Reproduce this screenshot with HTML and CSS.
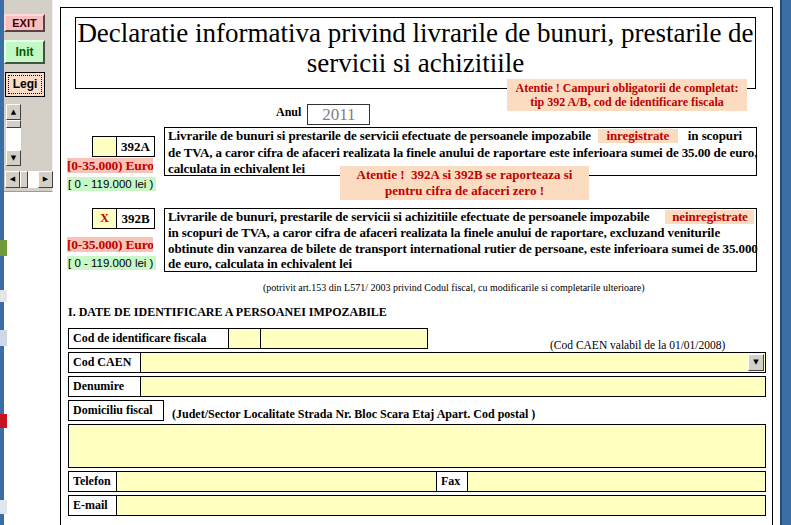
FILE: index.html
```html
<!DOCTYPE html>
<html>

<head>
    <meta charset="UTF-8" />
    <title>Declaratie 392</title>
    <link rel="stylesheet" href="styles.css">
</head>

<body>
    <div class="desk-left">
        <div class="desk-icon icon-a"></div>
        <div class="desk-icon icon-b"></div>
        <div class="desk-icon icon-c"></div>
        <div class="desk-icon icon-d"></div>
        <div class="desk-icon icon-e"></div>
    </div>

    <div class="toolbar-col">
        <div class="toolbar">
            <button class="tb-btn exit">EXIT</button>
            <button class="tb-btn init">Init</button>
            <button class="tb-btn legi"><span>Legi</span></button>
            <div class="vscroll">
                <div class="sb-btn">&#9650;</div>
                <div class="sb-thumb-v"></div>
                <div class="sb-track-v"></div>
                <div class="sb-btn">&#9660;</div>
            </div>
            <div class="hscroll">
                <div class="sb-btn">&#9664;</div>
                <div class="sb-thumb-h"></div>
                <div class="sb-track-h"></div>
                <div class="sb-btn">&#9654;</div>
            </div>
        </div>
    </div>

    <div class="gap-left"></div>

    <div class="page">
        <div class="title-box">
            Declaratie informativa privind livrarile de bunuri, prestarile de servicii si achizitiile
        </div>

        <div class="note note-top">
            Atentie ! Campuri obligatorii de completat:<br>
            tip 392 A/B, cod de identificare fiscala
        </div>

        <div class="year-row">
            <span class="year-label">Anul</span>
            <div class="year-input">2011</div>
        </div>

        <div class="type-row type-a">
            <div class="type-side">
                <div class="type-code">
                    <div class="type-check"></div>
                    <div class="type-name">392A</div>
                </div>
                <div class="euro">[0-35.000) Euro</div>
                <div class="lei">[ 0 - 119.000 lei )</div>
            </div>
            <div class="type-text">
                Livrarile de bunuri si prestarile de servicii efectuate de persoanele impozabile<span class="mark">inregistrate</span>in scopuri<br>
                de TVA, a caror cifra de afaceri realizata la finele anului de raportare este inferioara sumei de 35.00 de euro,<br>
                calculata in echivalent lei
            </div>
        </div>

        <div class="note note-mid">
            Atentie ! &nbsp;392A si 392B se raporteaza si<br>
            pentru cifra de afaceri zero !
        </div>

        <div class="type-row type-b">
            <div class="type-side">
                <div class="type-code">
                    <div class="type-check">X</div>
                    <div class="type-name">392B</div>
                </div>
                <div class="euro">[0-35.000) Euro</div>
                <div class="lei">[ 0 - 119.000 lei )</div>
            </div>
            <div class="type-text">
                Livrarile de bunuri, prestarile de servicii si achizitiile efectuate de persoanele impozabile<span class="mark mark-b">neinregistrate</span><br>
                in scopuri de TVA, a caror cifra de afaceri realizata la finele anului de raportare, excluzand veniturile<br>
                obtinute din vanzarea de bilete de transport international rutier de persoane, este inferioara sumei de 35.000<br>
                de euro, calculata in echivalent lei
            </div>
        </div>

        <div class="legal">(potrivit art.153 din L571/ 2003 privind Codul fiscal, cu modificarile si completarile ulterioare)</div>

        <div class="section-title">I. DATE DE IDENTIFICARE A PERSOANEI IMPOZABILE</div>

        <div class="form-row">
            <div class="field-label lbl-cif">Cod de identificare fiscala</div>
            <div class="field cif-prefix"></div>
            <div class="field cif-number"></div>
            <div class="caen-note">(Cod CAEN valabil de la 01/01/2008)</div>
        </div>

        <div class="form-row">
            <div class="field-label lbl-short">Cod CAEN</div>
            <div class="field field-grow select">
                <div class="select-btn">&#9660;</div>
            </div>
        </div>

        <div class="form-row">
            <div class="field-label lbl-short">Denumire</div>
            <div class="field field-grow"></div>
        </div>

        <div class="form-row addr-row">
            <div class="field-label lbl-addr">Domiciliu fiscal</div>
            <div class="addr-hint">(Judet/Sector Localitate Strada Nr. Bloc Scara Etaj Apart. Cod postal )</div>
        </div>

        <div class="field addr-box"></div>

        <div class="form-row">
            <div class="field-label lbl-tel">Telefon</div>
            <div class="field tel-field"></div>
            <div class="field-label lbl-fax">Fax</div>
            <div class="field field-grow"></div>
        </div>

        <div class="form-row">
            <div class="field-label lbl-tel">E-mail</div>
            <div class="field field-grow"></div>
        </div>
    </div>

    <div class="gap-right"></div>
    <div class="desk-right"></div>
</body>

</html>
```

FILE: styles.css
```css
* {
    box-sizing: border-box;
}

body {
    margin: 0;
    width: 791px;
    height: 525px;
    overflow: hidden;
    display: flex;
    background: #fff;
    font-family: "Liberation Serif", "Times New Roman", serif;
    color: #000;
}

/* desktop edges */
.desk-left {
    position: relative;
    width: 4px;
    background: #3a6ea5;
    flex-shrink: 0;
}

.desk-icon {
    position: absolute;
    left: 0;
    width: 7px;
}

.icon-a {
    top: 240px;
    height: 16px;
    background: #6f9a3c;
}

.icon-b {
    top: 290px;
    height: 12px;
    background: #e6e6e6;
}

.icon-c {
    top: 330px;
    height: 16px;
    background: #cfd8e6;
}

.icon-d {
    top: 414px;
    height: 14px;
    background: #c8141e;
}

.icon-e {
    top: 500px;
    height: 14px;
    background: #dfe6f0;
}

.desk-right {
    width: 11px;
    background: #3a6ea5;
    border-left: 2px solid #24507e;
    flex-shrink: 0;
}

.gap-left {
    width: 7px;
    flex-shrink: 0;
}

.gap-right {
    width: 7px;
    flex-shrink: 0;
}

/* left toolbar */
.toolbar-col {
    width: 49px;
    flex-shrink: 0;
}

.toolbar {
    height: 192px;
    background: #d4d0c8;
    border-right: 1px solid #f4f3ef;
    border-bottom: 1px solid #a09c94;
    padding-top: 14px;
    display: flex;
    flex-direction: column;
}

.tb-btn {
    width: 41px;
    padding: 0;
    font-family: "Liberation Sans", Arial, sans-serif;
    font-weight: bold;
    font-size: 11px;
    border: 2px outset #e0e0e0;
    cursor: pointer;
}

.exit {
    height: 18px;
    background: #f6c0c0;
    color: #400000;
    border-color: #ffd8d8 #b08080 #b08080 #ffd8d8;
}

.init {
    height: 24px;
    margin-top: 8px;
    background: #c4f8c4;
    color: #005a00;
    font-size: 12px;
    border-color: #e4ffe4 #80a880 #80a880 #e4ffe4;
}

.legi {
    height: 25px;
    margin-top: 8px;
    margin-left: 1px;
    width: 40px;
    background: #fbdcc8;
    border: 1px solid #000;
    font-size: 12px;
    padding: 2px;
}

.legi span {
    display: block;
    height: 100%;
    border: 1px dotted #000;
    line-height: 17px;
}

.vscroll {
    margin-top: 7px;
    margin-left: 2px;
    width: 15px;
    display: flex;
    flex-direction: column;
}

.hscroll {
    margin-top: 5px;
    margin-left: 1px;
    width: 48px;
    height: 17px;
    display: flex;
}

.sb-btn {
    width: 15px;
    height: 16px;
    background: #d4d0c8;
    border: 1px solid;
    border-color: #fff #404040 #404040 #fff;
    font-size: 7px;
    line-height: 14px;
    text-align: center;
    color: #000;
    font-family: "DejaVu Sans", sans-serif;
}

.hscroll .sb-btn {
    height: 17px;
}

.sb-thumb-v {
    height: 8px;
    background: #d4d0c8;
    border: 1px solid;
    border-color: #fff #404040 #404040 #fff;
}

.sb-track-v {
    height: 22px;
    background: #fff;
}

.sb-thumb-h {
    width: 8px;
    background: #d4d0c8;
    border: 1px solid;
    border-color: #fff #404040 #404040 #fff;
}

.sb-track-h {
    flex: 1;
    background: #fff;
}

/* page */
.page {
    position: relative;
    width: 713px;
    height: 530px;
    margin-top: 7px;
    border: 1px solid #000;
    border-bottom: none;
    flex-shrink: 0;
}

.title-box {
    margin: 9px 0 0 14px;
    width: 681px;
    height: 72px;
    border: 1px solid #000;
    text-align: center;
    font-size: 27px;
    line-height: 30px;
    padding-top: 0;
}

.note {
    position: absolute;
    background: #fcdcc0;
    color: #c00000;
    font-weight: bold;
    text-align: center;
    white-space: nowrap;
}

.note-top {
    left: 446px;
    top: 71px;
    width: 240px;
    height: 32px;
    font-size: 12px;
    line-height: 14px;
    padding-top: 2px;
}

.note-mid {
    left: 279px;
    top: 158px;
    width: 249px;
    height: 34px;
    font-size: 13px;
    line-height: 16px;
    padding-top: 1px;
}

.year-row {
    margin-top: 15px;
    padding-left: 215px;
    display: flex;
    align-items: flex-start;
}

.year-label {
    font-weight: bold;
    font-size: 12px;
    line-height: 14px;
    margin-top: 1px;
}

.year-input {
    margin-left: 6px;
    width: 63px;
    height: 21px;
    border: 1px solid #333;
    color: #808080;
    font-size: 17px;
    line-height: 19px;
    text-align: center;
}

.type-row {
    display: flex;
    align-items: flex-start;
    margin-top: 2px;
}

.type-b {
    margin-top: 17px;
}

.type-side {
    margin-left: 6px;
    width: 90px;
    margin-top: 9px;
}

.type-b .type-side {
    margin-top: 0;
}

.type-code {
    margin-left: 25px;
    width: 63px;
    height: 21px;
    border: 1px solid #000;
    display: flex;
}

.type-check {
    width: 24px;
    background: #ffffc2;
    border-right: 1px solid #000;
    color: #c00000;
    font-weight: bold;
    font-size: 12px;
    text-align: center;
    line-height: 19px;
}

.type-name {
    flex: 1;
    text-align: center;
    font-weight: bold;
    font-size: 13px;
    line-height: 19px;
}

.euro {
    margin-top: 1px;
    width: 86px;
    height: 15px;
    background: #f8c4b8;
    color: #c00000;
    font-weight: bold;
    font-size: 13.5px;
    line-height: 15px;
    letter-spacing: -0.2px;
    white-space: nowrap;
    overflow: hidden;
}

.type-b .euro {
    margin-top: 8px;
}

.lei {
    margin-top: 4px;
    width: 89px;
    height: 14px;
    background: #c8f8c8;
    font-family: "Liberation Sans", Arial, sans-serif;
    font-size: 11.5px;
    line-height: 14px;
    padding-left: 1px;
    white-space: nowrap;
    overflow: hidden;
}

.type-text {
    margin-left: 7px;
    width: 593px;
    border: 1px solid #000;
    padding: 0 3px;
    font-weight: bold;
    font-size: 13px;
    line-height: 16.5px;
    letter-spacing: -0.1px;
    white-space: nowrap;
}

.type-a .type-text {
    height: 49px;
}

.type-b .type-text {
    height: 64px;
    line-height: 15.8px;
}

.mark {
    display: inline-block;
    width: 80px;
    background: #fcdcc0;
    color: #c00000;
    text-align: center;
    margin: 0 10px 0 7px;
    line-height: 14px;
}

.mark-b {
    width: 89px;
    margin-left: 16px;
    margin-right: 0;
}

.legal {
    margin-top: 9px;
    padding-left: 202px;
    font-size: 10px;
    line-height: 14px;
}

.section-title {
    margin-top: 10px;
    padding-left: 7px;
    font-weight: bold;
    font-size: 12px;
    line-height: 14px;
}

/* form rows */
.form-row {
    display: flex;
    margin-left: 7px;
    margin-top: 3px;
    height: 21px;
}

.section-title + .form-row {
    margin-top: 9px;
}

.field-label {
    height: 21px;
    border: 1px solid #000;
    font-weight: bold;
    font-size: 12px;
    line-height: 14px;
    padding: 2px 4px;
    background: #fff;
    white-space: nowrap;
}

.field {
    height: 21px;
    background: #ffffc2;
    border: 1px solid #000;
    border-left: none;
}

.lbl-cif {
    width: 161px;
}

.cif-prefix {
    width: 32px;
}

.cif-number {
    width: 167px;
}

.caen-note {
    margin-left: 122px;
    align-self: flex-end;
    font-size: 11.5px;
    line-height: 12px;
    margin-bottom: -2px;
    white-space: nowrap;
}

.lbl-short {
    width: 73px;
}

.field-grow {
    width: 0;
    flex: 1;
    margin-right: 6px;
}

.select {
    display: flex;
    justify-content: flex-end;
    padding: 1px 1px;
}

.select-btn {
    width: 16px;
    height: 17px;
    background: #d4d0c8;
    border: 1px solid;
    border-color: #fff #404040 #404040 #fff;
    font-size: 7px;
    line-height: 15px;
    text-align: center;
    font-family: "DejaVu Sans", sans-serif;
}

.addr-row {
    align-items: flex-start;
}

.lbl-addr {
    width: 96px;
}

.addr-hint {
    margin-left: 8px;
    margin-top: 8px;
    font-weight: bold;
    font-size: 12px;
    line-height: 12px;
    white-space: nowrap;
}

.addr-box {
    margin: 3px 6px 0 7px;
    height: 44px;
    border-left: 1px solid #000;
}

.lbl-tel {
    width: 49px;
}

.tel-field {
    width: 320px;
}

.lbl-fax {
    width: 31px;
    border-left: none;
}
```
